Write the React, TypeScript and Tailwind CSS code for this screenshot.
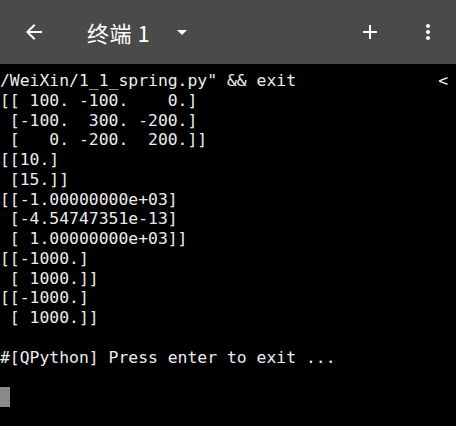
const LINES = [
  '/WeiXin/1_1_spring.py" && exit',
  "[[ 100. -100.    0.]",
  " [-100.  300. -200.]",
  " [   0. -200.  200.]]",
  "[[10.]",
  " [15.]]",
  "[[-1.00000000e+03]",
  " [-4.54747351e-13]",
  " [ 1.00000000e+03]]",
  "[[-1000.]",
  " [ 1000.]]",
  "[[-1000.]",
  " [ 1000.]]",
  "",
  "#[QPython] Press enter to exit ...",
  "",
];

export default function App() {
  return (
    <div className="w-[456px] h-[426px] bg-black overflow-hidden flex flex-col">
      {/* toolbar */}
      <div className="h-[64px] shrink-0 bg-[#4a4a4a] flex items-center text-white shadow-[0_2px_4px_rgba(0,0,0,0.5)]">
        <svg className="ml-[22px] w-[24px] h-[24px]" viewBox="0 0 24 24" fill="white">
          <path d="M20 11H7.83l5.59-5.59L12 4l-8 8 8 8 1.41-1.41L7.83 13H20v-2z" />
        </svg>
        <span className="ml-[41px] text-[22px] leading-none font-['Noto_Sans_CJK_SC',sans-serif] tracking-[0.5px]">
          终端 1
        </span>
        <svg className="ml-[20px] w-[24px] h-[24px]" viewBox="0 0 24 24" fill="white">
          <path d="M7 10l5 5 5-5z" />
        </svg>
        <div className="flex-1" />
        <svg className="w-[24px] h-[24px] mr-[34px]" viewBox="0 0 24 24" fill="white">
          <path d="M19 13h-6v6h-2v-6H5v-2h6V5h2v6h6v2z" />
        </svg>
        <svg className="w-[24px] h-[24px] mr-[16px]" viewBox="0 0 24 24" fill="white">
          <path d="M12 8c1.1 0 2-.9 2-2s-.9-2-2-2-2 .9-2 2 .9 2 2 2zm0 2c-1.1 0-2 .9-2 2s.9 2 2 2 2-.9 2-2-.9-2-2-2zm0 6c-1.1 0-2 .9-2 2s.9 2 2 2 2-.9 2-2-.9-2-2-2z" />
        </svg>
      </div>

      {/* terminal */}
      <div className="relative pt-[7px] font-['DejaVu_Sans_Mono',monospace] text-[16.4px] leading-[19.76px] text-[#ececec] whitespace-pre">
        {LINES.map((l, i) => (
          <div key={i} className="h-[19.76px]">
            {l}
          </div>
        ))}
        <div className="w-[10px] h-[20px] bg-[#8a8a8a]" />
        <span className="absolute right-[8px] top-[7px]">&lt;</span>
      </div>
    </div>
  );
}
